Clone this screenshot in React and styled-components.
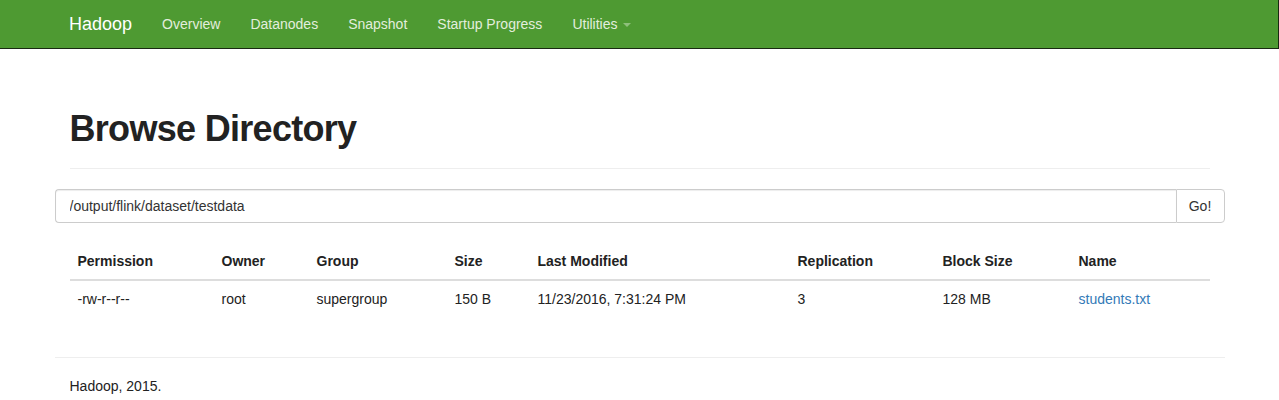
import React from "react";
import styled, { createGlobalStyle } from "styled-components";

const Global = createGlobalStyle`
  html, body { margin: 0; padding: 0; background: #fff; }
  body {
    font-family: "Liberation Sans", Arial, Helvetica, sans-serif;
    font-size: 14px;
    line-height: 1.42857;
    color: #333;
  }
  * { box-sizing: border-box; }
`;

const Navbar = styled.nav`
  background: #4e9a32;
  height: 49px;
  border-bottom: 1px solid #1a2a12;
  border-right: 1px solid #1a2a12;
`;

const NavInner = styled.div`
  width: 1170px;
  margin: 0 auto;
  display: flex;
  align-items: center;
  height: 48px;
`;

const Brand = styled.a`
  color: #fff;
  font-size: 18px;
  padding: 0 15px;
  line-height: 48px;
  text-decoration: none;
`;

const NavLink = styled.a`
  color: #e3eedd;
  font-size: 14px;
  padding: 0 15px;
  line-height: 48px;
  text-decoration: none;
  display: flex;
  align-items: center;
`;

const Caret = styled.span`
  display: inline-block;
  width: 0;
  height: 0;
  margin-left: 5px;
  margin-top: 2px;
  border-top: 4px solid #8fbf7c;
  border-left: 4px solid transparent;
  border-right: 4px solid transparent;
`;

const Container = styled.div`
  width: 1170px;
  margin: 0 auto;
`;

const Padded = styled.div`
  padding: 0 15px;
`;

const PageHeader = styled.div`
  margin: 60px 0 20px;
  padding-bottom: 9px;
  border-bottom: 1px solid #eee;
`;

const Title = styled.h1`
  margin: 20px 0 10px;
  font-size: 36px;
  font-weight: 700;
  line-height: 1.1;
  letter-spacing: -0.7px;
  color: #222;
`;

const InputGroup = styled.div`
  display: flex;
  height: 34px;
`;

const PathInput = styled.input`
  flex: 1;
  height: 34px;
  border: 1px solid #ccc;
  border-right: none;
  border-radius: 4px 0 0 4px;
  padding: 6px 14px;
  font-family: inherit;
  font-size: 14px;
  color: #333;
  box-shadow: inset 0 1px 1px rgba(0,0,0,.075);
  outline: none;
`;

const GoButton = styled.button`
  width: 49px;
  height: 34px;
  border: 1px solid #ccc;
  border-radius: 0 4px 4px 0;
  background: #fff;
  font-family: inherit;
  font-size: 14px;
  color: #333;
  padding: 6px 12px;
`;

const Table = styled.table`
  width: 100%;
  margin-top: 20px;
  margin-bottom: 20px;
  border-collapse: collapse;
  table-layout: fixed;
`;

const Th = styled.th`
  text-align: left;
  font-weight: bold;
  padding: 8px;
  line-height: 20px;
  border-bottom: 2px solid #ddd;
  color: #222;
`;

const Td = styled.td`
  padding: 8px;
  line-height: 20px;
  vertical-align: top;
  color: #222;
`;

const Link = styled.a`
  color: #337ab7;
  text-decoration: none;
`;

const FooterRule = styled.hr`
  margin: 40px 0 0;
  border: 0;
  border-top: 1px solid #eee;
`;

const Footer = styled.p`
  margin: 19px 0 10px;
  padding: 0 15px;
  color: #222;
`;

const cols = [
  ["Permission", 144],
  ["Owner", 95],
  ["Group", 138],
  ["Size", 83],
  ["Last Modified", 260],
  ["Replication", 145],
  ["Block Size", 136],
  ["Name", 139],
];

const row = ["-rw-r--r--", "root", "supergroup", "150 B", "11/23/2016, 7:31:24 PM", "3", "128 MB"];

export default function App() {
  return (
    <>
      <Global />
      <Navbar>
        <NavInner>
          <Brand href="#">Hadoop</Brand>
          <NavLink href="#">Overview</NavLink>
          <NavLink href="#">Datanodes</NavLink>
          <NavLink href="#">Snapshot</NavLink>
          <NavLink href="#">Startup Progress</NavLink>
          <NavLink href="#">Utilities<Caret /></NavLink>
        </NavInner>
      </Navbar>
      <Container>
        <Padded>
          <PageHeader>
            <Title>Browse Directory</Title>
          </PageHeader>
        </Padded>
        <InputGroup>
          <PathInput defaultValue="/output/flink/dataset/testdata" />
          <GoButton>Go!</GoButton>
        </InputGroup>
        <Padded>
          <Table>
            <colgroup>
              {cols.map(([n, w]) => (
                <col key={n} style={{ width: w }} />
              ))}
            </colgroup>
            <thead>
              <tr>
                {cols.map(([n]) => (
                  <Th key={n}>{n}</Th>
                ))}
              </tr>
            </thead>
            <tbody>
              <tr>
                {row.map((v, i) => (
                  <Td key={i}>{v}</Td>
                ))}
                <Td>
                  <Link href="#">students.txt</Link>
                </Td>
              </tr>
            </tbody>
          </Table>
        </Padded>
        <FooterRule />
        <Footer>Hadoop, 2015.</Footer>
      </Container>
    </>
  );
}
